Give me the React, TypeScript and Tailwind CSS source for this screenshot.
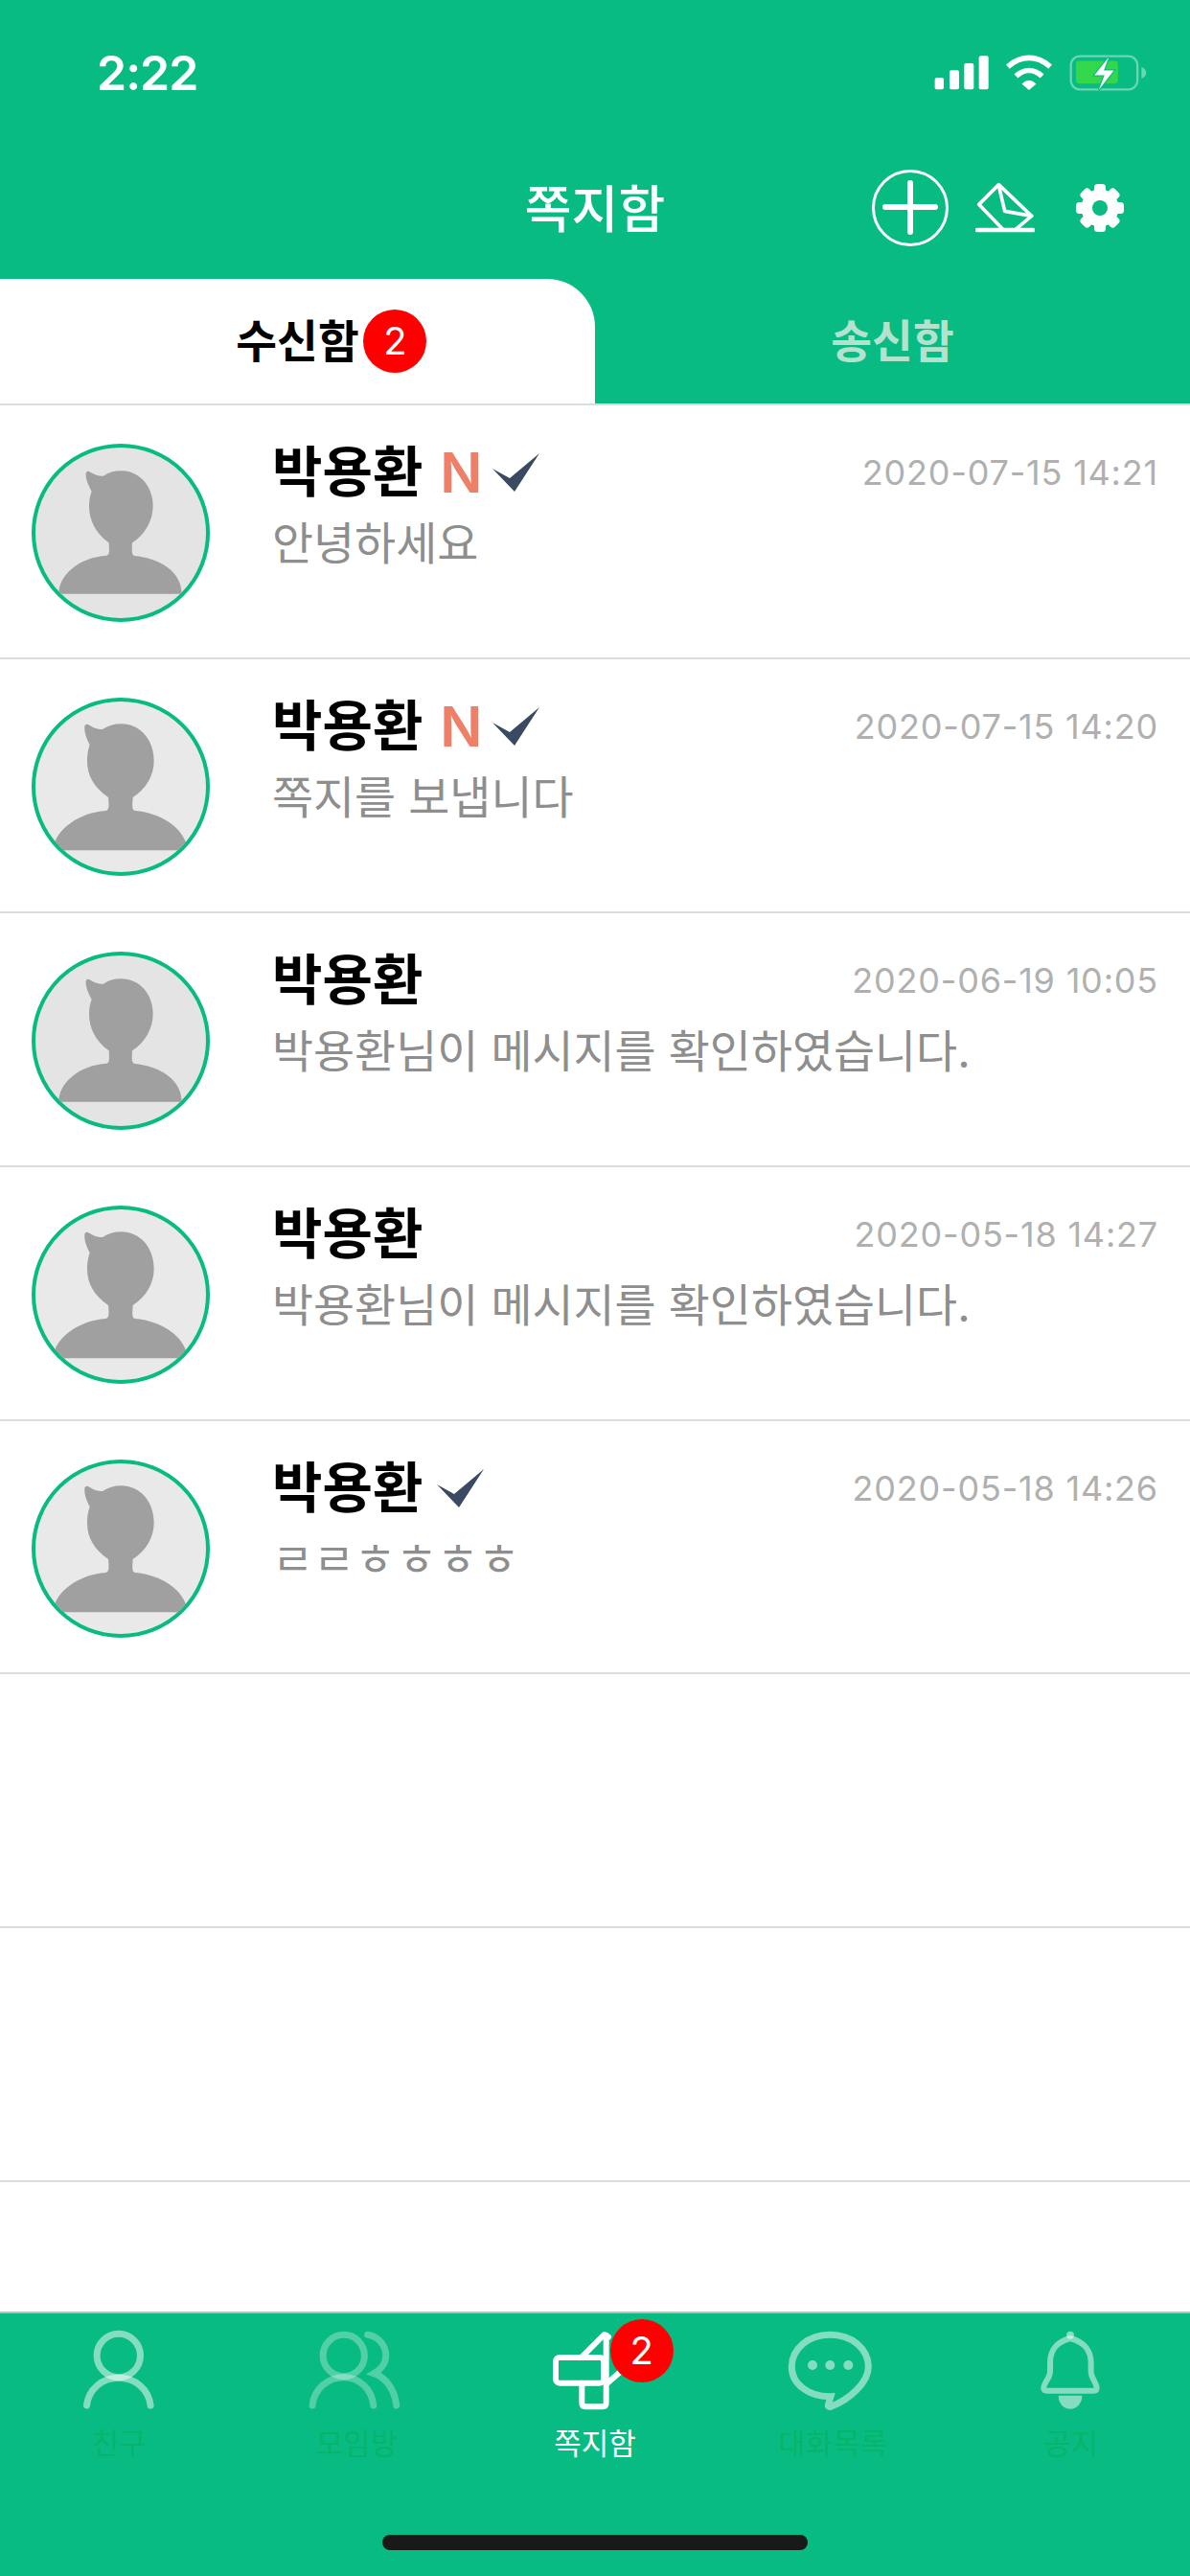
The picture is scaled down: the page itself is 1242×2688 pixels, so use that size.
import React from 'react';

const GREEN = '#08bb82';

interface Message {
  date: string;
  text: string;
  isNew?: boolean;
  checked?: boolean;
  wide?: boolean;
}

const messages: Message[] = [
  { date: '2020-07-15 14:21', text: '안녕하세요', isNew: true, checked: true },
  { date: '2020-07-15 14:20', text: '쪽지를 보냅니다', isNew: true, checked: true, wide: true },
  { date: '2020-06-19 10:05', text: '박용환님이 메시지를 확인하였습니다.' },
  { date: '2020-05-18 14:27', text: '박용환님이 메시지를 확인하였습니다.', wide: true },
  { date: '2020-05-18 14:26', text: 'ㄹㄹㅎㅎㅎㅎ', checked: true, wide: true }
];

// Status bar icons, drawn at 3x so the numbers can be read off the reference
const StatusIcons = () => (
  <div className="flex items-center">
    <svg width="57" height="36" viewBox="280 84 171 108" fill="#fff">
      <rect x="282" y="153" width="28" height="37" rx="6" />
      <rect x="328" y="130" width="30" height="60" rx="6" />
      <rect x="374" y="108" width="30" height="82" rx="6" />
      <rect x="420" y="85" width="30" height="105" rx="6" />
    </svg>
    <svg className="ml-[17px]" width="50" height="37" viewBox="500 80 150 112" fill="none" stroke="#fff" strokeWidth="17">
      <path d="M508 118 C550 81 600 81 642 118" />
      <path d="M534 148 C560 124 590 124 616 148" />
      <path d="M552 172 Q575 150 598 172 L575 192 Z" fill="#fff" stroke="none" />
    </svg>
    <svg className="ml-[17px]" width="81" height="38" viewBox="702 80 243 116">
      <rect x="705" y="85" width="212" height="106" rx="28" fill="none" stroke="#fff" strokeOpacity="0.4" strokeWidth="7" />
      <rect x="721" y="100" width="134" height="72" rx="10" fill="#32d74b" />
      <path d="M930 120 C940 124 945 130 945 138 C945 146 940 152 930 156 Z" fill="#fff" fillOpacity="0.4" />
      <path d="M826 88 L780 146 L812 146 L794 192 L842 130 L810 130 Z" fill="#fff" stroke={GREEN} strokeWidth="7" paintOrder="stroke" />
    </svg>
  </div>
);

const PlusIcon = () => (
  <svg width="80" height="80" viewBox="0 0 80 80" fill="none" stroke="#fff">
    <circle cx="40" cy="40" r="38.5" strokeWidth="3" />
    <path d="M40 14 V65 M14 39 H66" strokeWidth="6" strokeLinecap="round" />
  </svg>
);

const EnvelopeIcon = () => (
  <svg width="62" height="54" viewBox="414 480 186 162" fill="none" stroke="#fff" strokeWidth="11" strokeLinejoin="round" strokeLinecap="round">
    <path d="M500 628 L425 550 L487 488 L590 586 L540 628" />
    <path d="M487 490 L506 571 L590 586" />
    <path d="M419 630 H595" strokeWidth="14" />
  </svg>
);

const GearIcon = () => (
  <svg width="50" height="50" viewBox="0 0 50 50">
    <circle cx="25" cy="25" r="19.5" fill="#fff" />
    {[0, 45, 90, 135].map((deg) => (
      <rect key={deg} x="19" y="0" width="12" height="50" rx="3.5" fill="#fff" transform={`rotate(${deg} 25 25)`} />
    ))}
    <circle cx="25" cy="25" r="8" fill={GREEN} />
  </svg>
);

const CheckMark = () => (
  <svg width="51" height="44" viewBox="0 0 51 44" className="blur-[0.4px]">
    <path d="M1 18 L19 28 L50 2 L24 42 Z" fill="#3a4a63" />
  </svg>
);

// Default profile silhouette, two scalings of the same picture appear in the list
const Avatar: React.FC<{ wide?: boolean }> = ({ wide }) => (
  <div className={`w-[186px] h-[186px] shrink-0 rounded-full border-[4px] border-[#08bb82] overflow-hidden ${wide ? 'bg-[#e9e9e9]' : 'bg-[#e4e4e4]'}`}>
    <svg width="178" height="178" viewBox="52 52 534 534" className={wide ? 'blur-[0.7px]' : ''}>
      {wide ? (
        <path
          d="M105 518 C115 450 190 400 272 394 C284 392 282 375 280 352 C235 320 214 285 214 238 C214 215 218 200 222 188 C212 168 204 148 206 130 C208 122 214 122 222 127 C236 136 250 140 262 139 C280 128 298 122 320 122 C380 122 423 172 423 238 C423 285 398 325 357 352 C356 372 352 392 364 394 C440 400 520 445 530 518 Z"
          fill="#a0a0a0"
        />
      ) : (
        <path
          d="M125 510 C125 450 190 395 275 390 C285 388 283 375 282 350 C240 320 220 280 220 235 C220 215 224 200 228 190 C218 170 208 150 210 132 C212 125 218 125 225 130 C238 138 252 142 265 141 C280 130 298 125 320 125 C380 125 420 175 420 235 C420 280 395 325 355 350 C354 370 352 388 362 391 C440 398 510 440 510 510 Z"
          fill="#a0a0a0"
        />
      )}
    </svg>
  </div>
);

const MessageRow: React.FC<{ message: Message }> = ({ message }) => (
  <div className="flex h-[264.9px] shrink-0 border-b-2 border-[#dcdcdc] pl-[33px] pr-[33px] pt-[40px]">
    <Avatar wide={message.wide} />
    <div className="ml-[65px] flex-1 min-w-0">
      <div className="flex items-center h-[60px]">
        <span className="text-[57px] leading-[60px] font-bold text-black">박용환</span>
        {message.isNew && (
          <span className="ml-[18px] text-[58px] leading-[60px] font-semibold text-[#ee7f68]">N</span>
        )}
        {message.checked && (
          <span className={message.isNew ? 'ml-[10px]' : 'ml-[14px]'}>
            <CheckMark />
          </span>
        )}
        <span className="ml-auto text-[36px] leading-[60px] tracking-[0.8px] text-[#b0b0b0]">{message.date}</span>
      </div>
      <div className="text-[46.8px] leading-[60px] mt-[14px] text-[#8e8e8e]">{message.text}</div>
    </div>
  </div>
);

const softStroke = { stroke: '#fff', strokeOpacity: 0.5, strokeWidth: 21, fill: 'none', strokeLinecap: 'round' as const };

const tabs: { label: string; active?: boolean; viewBox: string; icon: React.ReactNode }[] = [
  {
    label: '친구',
    viewBox: '72.6 30 360 270',
    icon: (
      <g {...softStroke}>
        <circle cx="252" cy="120" r="68" />
        <path d="M152 276 C158 225 200 190 252 190 C304 190 346 225 352 276" />
      </g>
    )
  },
  {
    label: '모임방',
    viewBox: '817.8 30 360 270',
    icon: (
      <g {...softStroke} strokeOpacity={0.3}>
        <circle cx="955" cy="120" r="65" />
        <path d="M857 276 C862 225 905 188 955 188 C1005 188 1043 225 1048 276" />
        <path d="M1030 55 C1065 60 1087 90 1087 120 C1087 145 1070 165 1050 176 C1090 190 1115 230 1120 276" />
      </g>
    )
  },
  {
    label: '쪽지함',
    active: true,
    viewBox: '123 30 360 270',
    icon: (
      <g fill="none" stroke="#fff" strokeWidth="18" strokeLinejoin="round" strokeLinecap="round">
        <rect x="180" y="126" width="150" height="80" rx="12" />
        <path d="M262 206 V268 Q262 280 274 280 H326 Q338 280 338 268 V56" />
        <path d="M262 124 L332 54 L345 62" />
        <path d="M340 208 L400 155" />
      </g>
    )
  },
  {
    label: '대화목록',
    viewBox: '868 30 360 270',
    icon: (
      <g {...softStroke}>
        <path d="M1040 55 C1110 55 1160 100 1160 155 C1160 205 1100 258 1042 280 C1036 282 1032 278 1035 272 L1042 248 C975 250 920 210 920 155 C920 100 970 55 1040 55 Z" />
        <g fill="#fff" fillOpacity="0.5" stroke="none">
          <circle cx="985" cy="150" r="15" />
          <circle cx="1040" cy="150" r="15" />
          <circle cx="1097" cy="150" r="15" />
        </g>
      </g>
    )
  },
  {
    label: '공지',
    viewBox: '413 30 360 270',
    icon: (
      <g fill="none" stroke="#fff" strokeOpacity="0.5" strokeWidth="18" strokeLinejoin="round">
        <path d="M590 66 C545 78 527 103 527 145 V170 C527 190 507 205 507 222 Q507 230 517 230 H663 Q673 230 673 222 C673 205 655 190 655 170 V145 C655 103 635 78 590 66 Z" />
        <circle cx="590" cy="56" r="12" fill="#fff" fillOpacity="0.5" stroke="none" />
        <path d="M553 245 H627 C627 270 610 287 590 287 C570 287 553 270 553 245 Z" fill="#fff" fillOpacity="0.5" stroke="none" />
      </g>
    )
  }
];

const Badge = () => (
  <span className="flex items-center justify-center w-[66px] h-[66px] rounded-full bg-[#fe0000] text-white text-[40px] font-normal leading-none">
    2
  </span>
);

const BottomNav = () => (
  <nav className="h-[276px] shrink-0 bg-[#08bb82] border-t-2 border-[#bdbdbd]">
    <div className="grid grid-cols-5 pt-[14px]">
      {tabs.map((tab) => (
        <div key={tab.label} className="relative flex flex-col items-center">
          <svg width="120" height="90" viewBox={tab.viewBox}>
            {tab.icon}
          </svg>
          <span className={`mt-[12px] text-[31px] leading-[40px] ${tab.active ? 'text-white' : 'text-[#08b36a]'}`}>
            {tab.label}
          </span>
          {tab.active && (
            <span className="absolute left-[140px] top-[-8px]">
              <Badge />
            </span>
          )}
        </div>
      ))}
    </div>
    <div className="mx-auto mt-[75px] w-[444px] h-[16px] rounded-full bg-[#191919]" />
  </nav>
);

export default function App() {
  return (
    <div className="w-[1242px] h-[2688px] flex flex-col overflow-hidden bg-white font-['Inter','Noto_Sans_CJK_KR',sans-serif]">
      {/* Header */}
      <header className="h-[421px] shrink-0 bg-[#08bb82] flex flex-col">
        <div className="h-[151px] shrink-0 flex items-center justify-between pl-[101px] pr-[45px]">
          <span className="text-[50px] leading-none font-semibold tracking-[-1px] text-white">2:22</span>
          <StatusIcons />
        </div>
        <div className="h-[132px] shrink-0 grid grid-cols-[1fr_auto_1fr] items-center">
          <span />
          <span className="mt-[4px] text-[53px] leading-none font-medium text-white">쪽지함</span>
          <div className="flex items-center justify-end pr-[69px]">
            <PlusIcon />
            <span className="ml-[28px]">
              <EnvelopeIcon />
            </span>
            <span className="ml-[43px]">
              <GearIcon />
            </span>
          </div>
        </div>
        <div className="h-[8px] shrink-0" />
        {/* Tabs */}
        <div className="flex-1 grid grid-cols-2">
          <div className="bg-white rounded-tr-[50px] flex items-center justify-center">
            <span className="relative text-[46.5px] leading-none font-semibold text-black">
              수신함
              <span className="absolute left-[133px] top-[-10px]">
                <Badge />
              </span>
            </span>
          </div>
          <div className="flex items-center justify-center">
            <span className="text-[46.5px] leading-none font-semibold text-[#b3e3cf]">송신함</span>
          </div>
        </div>
      </header>

      {/* List */}
      <main className="flex-1 min-h-0 flex flex-col overflow-hidden border-t-2 border-[#dcdcdc]">
        {messages.map((message) => (
          <MessageRow key={message.date} message={message} />
        ))}
        <div className="h-[264.9px] shrink-0 border-b-2 border-[#dcdcdc]" />
        <div className="h-[264.9px] shrink-0 border-b-2 border-[#dcdcdc]" />
      </main>

      <BottomNav />
    </div>
  );
}
